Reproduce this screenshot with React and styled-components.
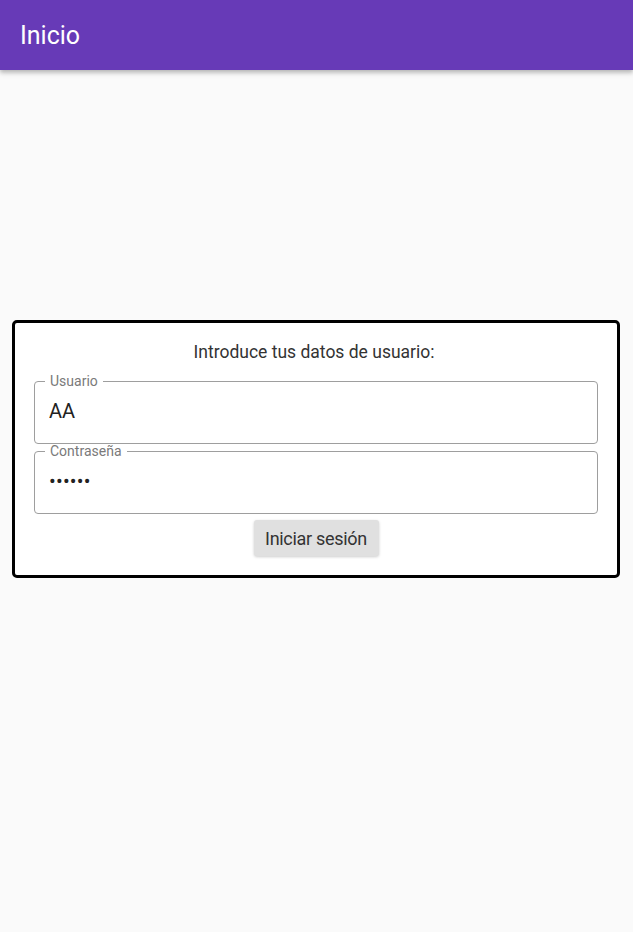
import React from "react";
import styled, { createGlobalStyle } from "styled-components";

const Global = createGlobalStyle`
  html, body { margin: 0; padding: 0; background: #fafafa; }
  body { font-family: Roboto, "Noto Sans", sans-serif; }
  * { box-sizing: border-box; }
`;

const Page = styled.div`
  min-height: 932px;
  background: #fafafa;
`;

const AppBar = styled.header`
  height: 70px;
  background: #673ab7;
  display: flex;
  align-items: center;
  padding: 0 20px;
  box-shadow: 0 2px 4px rgba(0,0,0,0.2), 0 4px 5px rgba(0,0,0,0.1);
`;

const Title = styled.h1`
  margin: 0;
  color: #fff;
  font-size: 25px;
  font-weight: 400;
`;

const Main = styled.main`
  padding: 250px 13px 0 12px;
`;

const Card = styled.form`
  border: 3px solid #000;
  border-radius: 5px;
  background: #fff;
  padding: 19px 19px 19px 19px;
  display: flex;
  flex-direction: column;
  align-items: stretch;
`;

const Heading = styled.p`
  margin: 0 0 12px;
  padding-right: 4px;
  text-align: center;
  font-size: 17.5px;
  line-height: 20px;
  color: #333;
`;

const Field = styled.fieldset`
  margin: 0;
  padding: 0 14px 0 10px;
  border: 1px solid #9e9e9e;
  border-radius: 4px;
  min-width: 0;
`;

const Legend = styled.legend`
  padding: 0 5px;
  font-size: 14px;
  line-height: 14px;
  color: #7a7a7a;
`;

const Input = styled.input`
  display: block;
  width: 100%;
  border: none;
  outline: none;
  background: transparent;
  font-family: Roboto, "Noto Sans", sans-serif;
  font-size: 20px;
  line-height: 20px;
  height: 55px;
  padding: 3px 4px 12px;
  color: #222;
  letter-spacing: ${p => (p.type === "password" ? "0.2px" : "0")};
`;

const Actions = styled.div`
  display: flex;
  justify-content: center;
  padding-top: 6px;
`;

const Button = styled.button`
  height: 36px;
  width: 125px;
  border: none;
  border-radius: 3px;
  background: #e0e0e0;
  color: #333;
  font-family: Roboto, "Noto Sans", sans-serif;
  font-size: 18px;
  letter-spacing: -0.3px;
  box-shadow: 0 1px 3px rgba(0,0,0,0.2);
  cursor: pointer;
`;

export default function App() {
  return (
    <Page>
      <Global />
      <AppBar>
        <Title>Inicio</Title>
      </AppBar>
      <Main>
        <Card onSubmit={e => e.preventDefault()}>
          <Heading>Introduce tus datos de usuario:</Heading>
          <Field>
            <Legend>Usuario</Legend>
            <Input type="text" defaultValue="AA" />
          </Field>
          <Field>
            <Legend>Contraseña</Legend>
            <Input type="password" defaultValue="123456" />
          </Field>
          <Actions>
            <Button type="submit">Iniciar sesión</Button>
          </Actions>
        </Card>
      </Main>
    </Page>
  );
}
